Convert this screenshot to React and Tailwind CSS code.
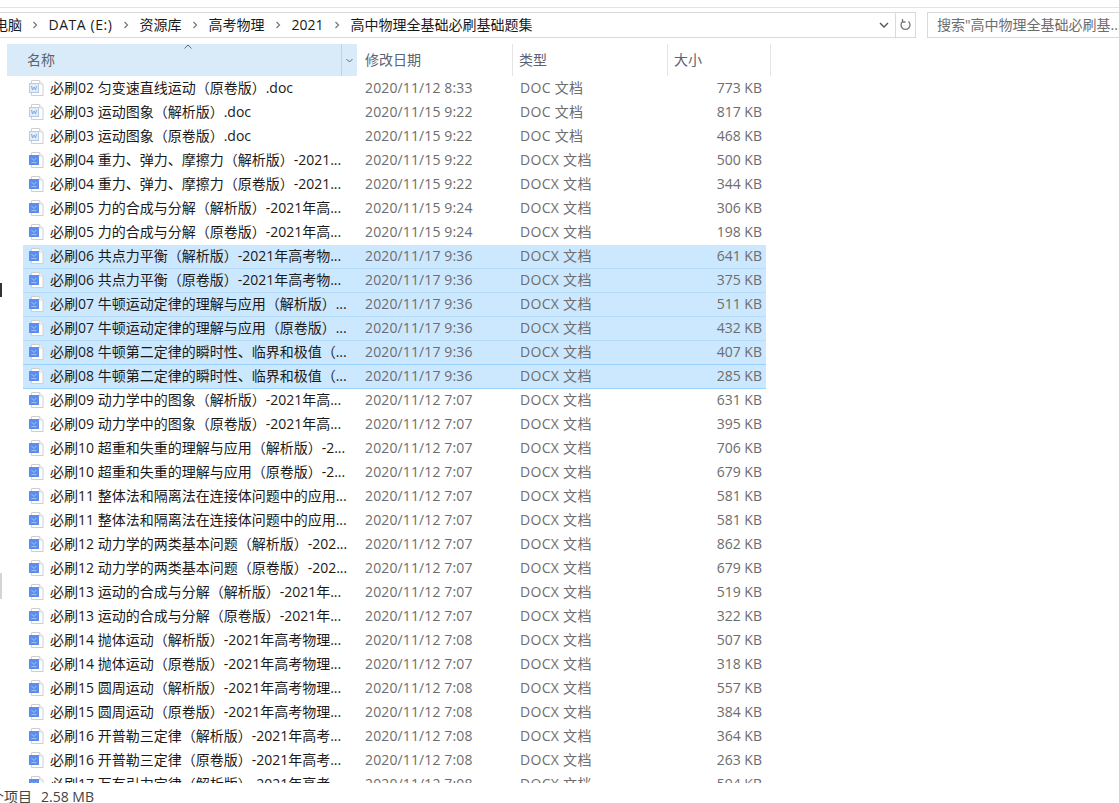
const crumbs = ['DATA (E:)', '资源库', '高考物理', '2021', '高中物理全基础必刷基础题集'];

const files = [
  ['必刷02 匀变速直线运动（原卷版）.doc', '2020/11/12 8:33', 'DOC 文档', '773 KB'],
  ['必刷03 运动图象（解析版）.doc', '2020/11/15 9:22', 'DOC 文档', '817 KB'],
  ['必刷03 运动图象（原卷版）.doc', '2020/11/15 9:22', 'DOC 文档', '468 KB'],
  ['必刷04 重力、弹力、摩擦力（解析版）-2021...', '2020/11/15 9:22', 'DOCX 文档', '500 KB'],
  ['必刷04 重力、弹力、摩擦力（原卷版）-2021...', '2020/11/15 9:22', 'DOCX 文档', '344 KB'],
  ['必刷05 力的合成与分解（解析版）-2021年高...', '2020/11/15 9:24', 'DOCX 文档', '306 KB'],
  ['必刷05 力的合成与分解（原卷版）-2021年高...', '2020/11/15 9:24', 'DOCX 文档', '198 KB'],
  ['必刷06 共点力平衡（解析版）-2021年高考物...', '2020/11/17 9:36', 'DOCX 文档', '641 KB', 1],
  ['必刷06 共点力平衡（原卷版）-2021年高考物...', '2020/11/17 9:36', 'DOCX 文档', '375 KB', 1],
  ['必刷07 牛顿运动定律的理解与应用（解析版）...', '2020/11/17 9:36', 'DOCX 文档', '511 KB', 1],
  ['必刷07 牛顿运动定律的理解与应用（原卷版）...', '2020/11/17 9:36', 'DOCX 文档', '432 KB', 1],
  ['必刷08 牛顿第二定律的瞬时性、临界和极值（...', '2020/11/17 9:36', 'DOCX 文档', '407 KB', 1],
  ['必刷08 牛顿第二定律的瞬时性、临界和极值（...', '2020/11/17 9:36', 'DOCX 文档', '285 KB', 2],
  ['必刷09 动力学中的图象（解析版）-2021年高...', '2020/11/12 7:07', 'DOCX 文档', '631 KB'],
  ['必刷09 动力学中的图象（原卷版）-2021年高...', '2020/11/12 7:07', 'DOCX 文档', '395 KB'],
  ['必刷10 超重和失重的理解与应用（解析版）-2...', '2020/11/12 7:07', 'DOCX 文档', '706 KB'],
  ['必刷10 超重和失重的理解与应用（原卷版）-2...', '2020/11/12 7:07', 'DOCX 文档', '679 KB'],
  ['必刷11 整体法和隔离法在连接体问题中的应用...', '2020/11/12 7:07', 'DOCX 文档', '581 KB'],
  ['必刷11 整体法和隔离法在连接体问题中的应用...', '2020/11/12 7:07', 'DOCX 文档', '581 KB'],
  ['必刷12 动力学的两类基本问题（解析版）-202...', '2020/11/12 7:07', 'DOCX 文档', '862 KB'],
  ['必刷12 动力学的两类基本问题（原卷版）-202...', '2020/11/12 7:07', 'DOCX 文档', '679 KB'],
  ['必刷13 运动的合成与分解（解析版）-2021年...', '2020/11/12 7:07', 'DOCX 文档', '519 KB'],
  ['必刷13 运动的合成与分解（原卷版）-2021年...', '2020/11/12 7:07', 'DOCX 文档', '322 KB'],
  ['必刷14 抛体运动（解析版）-2021年高考物理...', '2020/11/12 7:08', 'DOCX 文档', '507 KB'],
  ['必刷14 抛体运动（原卷版）-2021年高考物理...', '2020/11/12 7:07', 'DOCX 文档', '318 KB'],
  ['必刷15 圆周运动（解析版）-2021年高考物理...', '2020/11/12 7:08', 'DOCX 文档', '557 KB'],
  ['必刷15 圆周运动（原卷版）-2021年高考物理...', '2020/11/12 7:08', 'DOCX 文档', '384 KB'],
  ['必刷16 开普勒三定律（解析版）-2021年高考...', '2020/11/12 7:08', 'DOCX 文档', '364 KB'],
  ['必刷16 开普勒三定律（原卷版）-2021年高考...', '2020/11/12 7:08', 'DOCX 文档', '263 KB'],
  ['必刷17 万有引力定律（解析版）-2021年高考...', '2020/11/12 7:08', 'DOCX 文档', '594 KB'],
];

function Chevron() {
  return (
    <svg width="6" height="8" viewBox="0 0 6 8" className="shrink-0">
      <path d="M1.5 1l3 3-3 3" fill="none" stroke="#777" strokeWidth="1.2" />
    </svg>
  );
}

function FileIcon({ type }) {
  const isDoc = type === 'DOC 文档';
  return (
    <svg width="16" height="16" viewBox="0 0 16 16" className="shrink-0">
      <path d="M2.500 .5h8l3.500 3.500v11.500h-11.500z" fill="#fff" stroke="#cfcfcf" />
      <path d="M10.500 .5v3.500h3.500" fill="#f4f4f4" stroke="#d8d8d8" />
      {isDoc ? (
        <>
          <rect x=".5" y="3.500" width="9" height="9" fill="#e3edfa" stroke="#b4cbec" />
          <path d="M2.500 6l1 4 1.500-3 1.500 3 1-4" fill="none" stroke="#7ba3dd" strokeWidth=".9" />
        </>
      ) : (
        <>
          <rect x="0" y="3" width="10" height="10" fill="#5b8def" />
          <path d="M2.500 6l2.500 2.500 2.500-2.500M2.500 10.500h5" fill="none" stroke="#a9c5f7" strokeWidth=".9" />
        </>
      )}
    </svg>
  );
}

function FileRow({ file }) {
  const [name, date, type, size, selected] = file;
  let rowStyle = 'border-b border-transparent';
  if (selected === 1) rowStyle = 'bg-[#cce8ff] border-b border-[#b5dcf8]';
  if (selected === 2) rowStyle = 'bg-[#cce8ff] border-y border-[#99d1ff] -mt-px h-[25px]';
  return (
    <div className={`ml-[23px] w-[743px] h-6 flex items-center pb-px ${rowStyle}`}>
      <div className="w-[342px] pl-[6px] flex items-center gap-[5px] shrink-0">
        <FileIcon type={type} />
        <span className="whitespace-nowrap text-[#1a1a1a]">{name}</span>
      </div>
      <span className="w-[155px] tracking-[0.13px] text-[#6d6d6d] shrink-0 whitespace-nowrap">{date}</span>
      <span className="w-[154px] tracking-[0.3px] text-[#6d6d6d] shrink-0 whitespace-nowrap">{type}</span>
      <span className="w-[88px] text-right text-[#6d6d6d] shrink-0 whitespace-nowrap">{size}</span>
    </div>
  );
}

export default function App() {
  return (
    <div className="w-[1119px] h-[803px] bg-white overflow-hidden flex flex-col text-[14px] leading-5 font-['Open_Sans','Noto_Sans_CJK_SC',sans-serif]">
      <div className="h-[8px] border-b border-[#e3e3e3] shrink-0" />

      <div className="mt-1 h-[26px] flex shrink-0">
        <div className="w-[916px] flex items-center border-y border-r border-[#d9d9d9] shrink-0">
          <div className="flex-1 flex items-center text-[#1a1a1a] overflow-hidden">
            <span className="-ml-[6px] mr-[10px] whitespace-nowrap">电脑</span>
            {crumbs.map((c, i) => (
              <div key={c} className="flex items-center whitespace-nowrap">
                <Chevron />
                <span className={`mx-[10.5px] ${i === 0 ? 'tracking-[0.55px]' : ''}`}>{c}</span>
              </div>
            ))}
          </div>
          <svg width="10" height="7" viewBox="0 0 10 7" className="mr-[6px]">
            <path d="M1 1l4 4 4-4" fill="none" stroke="#555" strokeWidth="1.4" />
          </svg>
          <div className="w-5 h-full flex items-center justify-center border-l border-[#d9d9d9]">
            <svg width="12" height="14" viewBox="0 0 12 14">
              <path d="M2.500 3.500a4.500 4.500 0 1 0 6 0M2.500 1v3h3" fill="none" stroke="#777" strokeWidth="1.300" />
            </svg>
          </div>
        </div>
        <div className="ml-[11px] flex-1 flex items-center pl-[9px] border-y border-l border-[#d9d9d9] text-[#6d6d6d] whitespace-nowrap overflow-hidden">
          搜索"高中物理全基础必刷基...
        </div>
      </div>

      <div className="mt-[6px] ml-[7px] h-8 flex shrink-0 text-[#5a6472]">
        <div className="relative w-[350px] bg-[#d9ebf9] flex items-center pl-5 shrink-0">
          名称
          <svg width="8" height="5" viewBox="0 0 8 5" className="absolute left-[177px] top-0">
            <path d="M.5 4.500l3.500-3.500 3.500 3.500" fill="none" stroke="#666" />
          </svg>
          <div className="absolute right-0 top-0 bottom-0 w-4 border-l border-[#bcd4e8] flex items-center justify-center">
            <svg width="7" height="5" viewBox="0 0 7 5">
              <path d="M.5 1l3 3 3-3" fill="none" stroke="#666" />
            </svg>
          </div>
        </div>
        <div className="w-[156px] flex items-center pl-2 border-r border-[#e5e5e5] shrink-0">修改日期</div>
        <div className="w-[155px] flex items-center pl-[6px] border-r border-[#e5e5e5] shrink-0">类型</div>
        <div className="w-[103px] flex items-center pl-[6px] border-r border-[#e5e5e5] shrink-0">大小</div>
      </div>

      <div className="mt-px h-[706px] overflow-hidden shrink-0 relative">
        {files.map((f, i) => (
          <FileRow key={i} file={f} />
        ))}
        <div className="absolute left-0 top-[206px] w-[2px] h-[14px] bg-[#333]" />
        <div className="absolute left-0 top-[496px] w-[2px] h-[26px] bg-[#d4d4d4]" />
      </div>

      <div className="h-5 shrink-0 pt-1 flex items-start text-[#444] whitespace-nowrap">
        <span className="-ml-[10px] mr-[9px]">个项目</span>
        <span>2.58 MB</span>
      </div>
    </div>
  );
}
